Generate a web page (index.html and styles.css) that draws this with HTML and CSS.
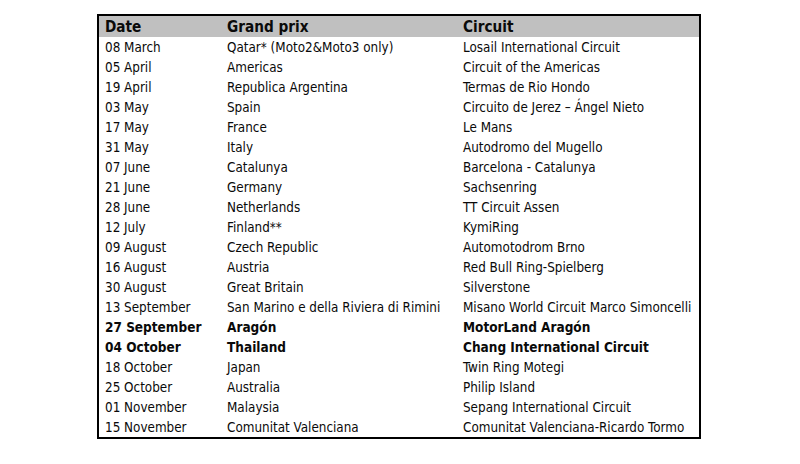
FILE: index.html
```html
<!DOCTYPE html>
<html>
<head>
<meta charset="utf-8">
<link rel="stylesheet" href="styles.css">
</head>
<body>
<div class="wrap">
<table class="cal">
<colgroup><col class="c1"><col class="c2"><col class="c3"></colgroup>
<thead>
<tr class="head"><th>Date</th><th>Grand prix</th><th>Circuit</th></tr>
</thead>
<tbody>
<tr><td>08 March</td><td>Qatar* (Moto2&amp;Moto3 only)</td><td>Losail International Circuit</td></tr>
<tr><td>05 April</td><td>Americas</td><td>Circuit of the Americas</td></tr>
<tr><td>19 April</td><td>Republica Argentina</td><td>Termas de Rio Hondo</td></tr>
<tr><td>03 May</td><td>Spain</td><td>Circuito de Jerez – Ángel Nieto</td></tr>
<tr><td>17 May</td><td>France</td><td>Le Mans</td></tr>
<tr><td>31 May</td><td>Italy</td><td>Autodromo del Mugello</td></tr>
<tr><td>07 June</td><td>Catalunya</td><td>Barcelona - Catalunya</td></tr>
<tr><td>21 June</td><td>Germany</td><td>Sachsenring</td></tr>
<tr><td>28 June</td><td>Netherlands</td><td>TT Circuit Assen</td></tr>
<tr><td>12 July</td><td>Finland**</td><td>KymiRing</td></tr>
<tr><td>09 August</td><td>Czech Republic</td><td>Automotodrom Brno</td></tr>
<tr><td>16 August</td><td>Austria</td><td>Red Bull Ring-Spielberg</td></tr>
<tr><td>30 August</td><td>Great Britain</td><td>Silverstone</td></tr>
<tr><td>13 September</td><td>San Marino e della Riviera di Rimini</td><td>Misano World Circuit Marco Simoncelli</td></tr>
<tr class="strong"><td>27 September</td><td>Aragón</td><td>MotorLand Aragón</td></tr>
<tr class="strong"><td>04 October</td><td>Thailand</td><td>Chang International Circuit</td></tr>
<tr><td>18 October</td><td>Japan</td><td>Twin Ring Motegi</td></tr>
<tr><td>25 October</td><td>Australia</td><td>Philip Island</td></tr>
<tr><td>01 November</td><td>Malaysia</td><td>Sepang International Circuit</td></tr>
<tr><td>15 November</td><td>Comunitat Valenciana</td><td>Comunitat Valenciana-Ricardo Tormo</td></tr>
</tbody>
</table>
</div>
</body>
</html>
```
FILE: styles.css
```css
html, body {
  margin: 0;
  padding: 0;
  background: #ffffff;
}
body {
  font-family: "DejaVu Sans Condensed", "DejaVu Sans", sans-serif;
  font-stretch: condensed;
  color: #0a0a0a;
}
.wrap {
  padding: 14px 0 0 97px;
}
.cal {
  border-collapse: collapse;
  border: 2px solid #000000;
  width: 604px;
  table-layout: fixed;
}
.c1 { width: 123px; }
.c2 { width: 236px; }
.c3 { width: auto; }
.cal th, .cal td {
  padding: 0 0 0 6px;
  text-align: left;
  white-space: nowrap;
  vertical-align: middle;
}
.head th {
  background: #c0c0c0;
  padding-top: 1px;
  font-size: 15.2px;
  font-weight: bold;
  line-height: 20px;
}
.cal td {
  padding-top: 1px;
  font-size: 13.35px;
  line-height: 19px;
}
.strong td {
  font-size: 13.5px;
  font-weight: bold;
}
```
